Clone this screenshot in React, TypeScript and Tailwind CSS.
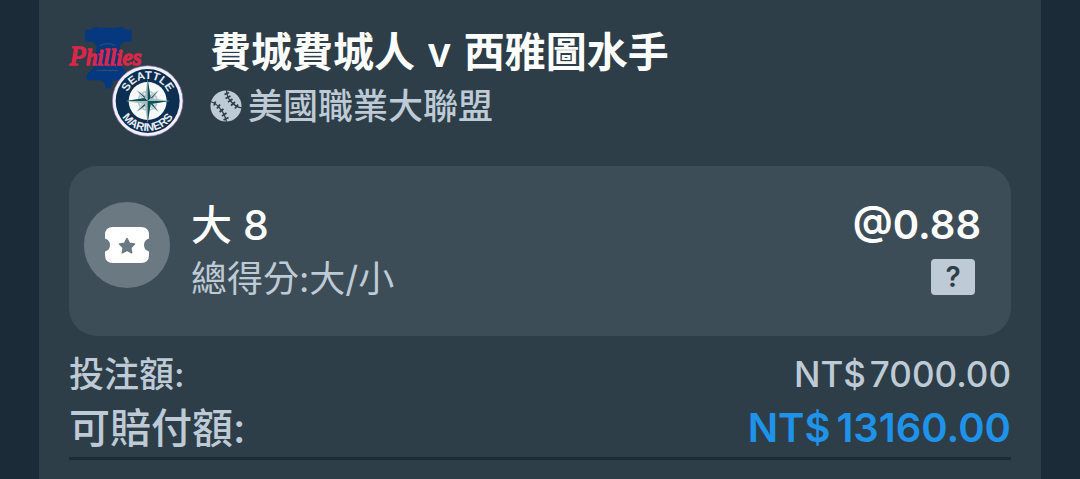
import React from "react";

const font = "font-['Inter','Noto_Sans_CJK_TC',sans-serif]";

function TeamLogos() {
    return (
        <svg
            className="w-[116px] h-[115px] shrink-0"
            viewBox="24 30 348 345"
            role="img"
            aria-label="Phillies, Mariners"
        >
            <defs>
                <path id="arcTop" d="M197 258a66 66 0 0 1 132 0" />
                <path id="arcBottom" d="M173 258a90 90 0 0 0 180 0" />
            </defs>
            <g fill="#06387f">
                <path d="M98 38q10-5 20 0h54q10-5 20 0l4 6h19v36h-24l-8 10h-76l-8-10H75V44h18z" />
                <path d="M110 84h70q2 58 8 74l16 18q6 10 0 20h-42l-4 8-5 16h-16l-4-16-12-8H82q-6-8 0-18l18-20q8-20 10-74z" />
            </g>
            <path d="M120 92q22-12 46 0M112 166h62" fill="none" stroke="#2b4a73" strokeWidth="4" />
            <g
                fill="#d9274a"
                stroke="#d9274a"
                strokeWidth="5"
                strokeLinejoin="round"
                fontStyle="italic"
                className="font-['Liberation_Serif',serif]"
            >
                <text x="29" y="151">
                    <tspan fontSize="80">P</tspan>
                    <tspan fontSize="68">hillies</tspan>
                </text>
            </g>
            <circle cx="263" cy="258" r="106" fill="#f3f0fa" stroke="#7b6aa5" strokeWidth="2" />
            <circle cx="263" cy="258" r="96" fill="#0c2f51" />
            <g fill="#e8edf2" fontSize="34" fontWeight="700" className="font-['Liberation_Sans',sans-serif]">
                <text textAnchor="middle">
                    <textPath href="#arcTop" startOffset="50%">SEATTLE</textPath>
                </text>
                <text textAnchor="middle">
                    <textPath href="#arcBottom" startOffset="50%">MARINERS</textPath>
                </text>
            </g>
            <circle cx="263" cy="258" r="57" fill="#f7fafa" />
            <circle cx="263" cy="258" r="28" fill="none" stroke="#b9c5ca" strokeWidth="5" />
            <g transform="rotate(45 263 258)">
                <path d="M263 211l10 37 37 10-37 10-10 37-10-37-37-10 37-10z" fill="#c3ced2" />
                <path d="M263 214v88l6-38zM219 258h88l-38-6z" fill="#0c4a56" />
            </g>
            <path d="M263 192l9 57 57 9-57 9-9 57-9-57-57-9 57-9z" fill="#a9bcbe" />
            <path d="M263 192v66l9-9zM329 258h-66l9 9zM263 324v-66l9 9zM197 258h66l-9-9z" fill="#075258" />
        </svg>
    );
}

function BaseballIcon() {
    return (
        <svg className="w-8 h-8 shrink-0" viewBox="0 0 32 32" aria-hidden="true">
            <circle cx="16" cy="16" r="15.5" fill="#becad5" />
            <g fill="none" stroke="#2d3e48">
                <path
                    d="M16.500 0q0 7 4.500 11.500 4.500 5.500 11 6.500M0 11.500q6 1.500 10 7 5 5.500 6.500 13.500"
                    strokeWidth="1.200"
                />
                <path
                    d="M14.500 4.500l4.500-2M15.500 8.500l5-2.500M18 12l4.500-3M21 15.500l4-3.500M25 18.500l3-4M4 15.500l1.500-4M7 18.500l3-4M9.500 22l4-3M12 26l4.500-3M13.500 30l5-2.500"
                    strokeWidth="1.800"
                />
            </g>
        </svg>
    );
}

function TicketIcon() {
    return (
        <div className="w-[86px] h-[86px] shrink-0 rounded-full bg-[#6b7982] flex items-center justify-center">
            <svg className="w-11 h-9" viewBox="0 0 44 36" aria-hidden="true">
                <path
                    d="M8 0h28q8 0 8 8v3.500q-5 1.500-5 6.500t5 6.500V28q0 8-8 8H8q-8 0-8-8v-3.500q5-1.500 5-6.500t-5-6.500V8q0-8 8-8z"
                    fill="#fff"
                />
                <path
                    d="M22 11.500l2.300 4.700 5.200.8-3.700 3.600.9 5.200-4.700-2.400-4.700 2.400.9-5.200-3.700-3.600 5.200-.8z"
                    fill="#6b7982"
                    stroke="#6b7982"
                    strokeWidth="1.500"
                    strokeLinejoin="round"
                />
            </svg>
        </div>
    );
}

interface AmountRowProps {
    label: string;
    amount: string;
    highlight?: boolean;
}

function AmountRow({ label, amount, highlight }: AmountRowProps) {
    return (
        <div
            className={
                highlight
                    ? "flex justify-between text-[41px] leading-[54px] font-medium"
                    : "flex justify-between text-[35px] leading-[54px] font-medium"
            }
        >
            <dt>{label}</dt>
            <dd className={highlight ? "flex gap-1.5 text-[40px] font-semibold text-[#1f93ea]" : "flex gap-1"}>
                <span>NT$</span>
                <span>{amount}</span>
            </dd>
        </div>
    );
}

export default function App() {
    return (
        <div className={`min-h-screen bg-[#1c2b38] px-[39px] text-[#becad5] ${font}`}>
            <main className="min-h-screen bg-[#2d3e48] px-[30px] pt-[25px]">
                <header className="flex -ml-px gap-[26px] mb-[26px]">
                    <TeamLogos />
                    <div>
                        <h1 className="text-[41px] leading-[54px] font-semibold text-white">
                            費城費城人 <span className="mx-0.5">v</span> 西雅圖水手
                        </h1>
                        <p className="flex items-center gap-1.5 text-[35px] leading-[54px] font-medium">
                            <BaseballIcon />
                            美國職業大聯盟
                        </p>
                    </div>
                </header>

                <section className="flex gap-[21px] rounded-[28px] bg-[#3d4d57] pl-[15px] pr-[30px] pt-8 pb-[30px]">
                    <div className="pt-1">
                        <TicketIcon />
                    </div>
                    <div className="flex-1">
                        <h2 className="text-[41px] leading-[54px] font-medium text-white">大 8</h2>
                        <p className="text-[36px] leading-[54px]">總得分:大/小</p>
                    </div>
                    <div className="flex flex-col items-end">
                        <span className="text-[40px] leading-[54px] font-semibold text-white">@0.88</span>
                        <button
                            aria-label="說明"
                            className="mt-[7px] mr-1.5 w-11 h-9 rounded-sm bg-[#becad5] text-[28px] leading-9 font-semibold text-[#2d3e48]"
                        >
                            ?
                        </button>
                    </div>
                </section>

                <dl className="mt-[11px] border-b-3 border-[#1c2b38] pb-0.5">
                    <AmountRow label="投注額:" amount="7000.00" />
                    <AmountRow label="可賠付額:" amount="13160.00" highlight />
                </dl>
            </main>
        </div>
    );
}
